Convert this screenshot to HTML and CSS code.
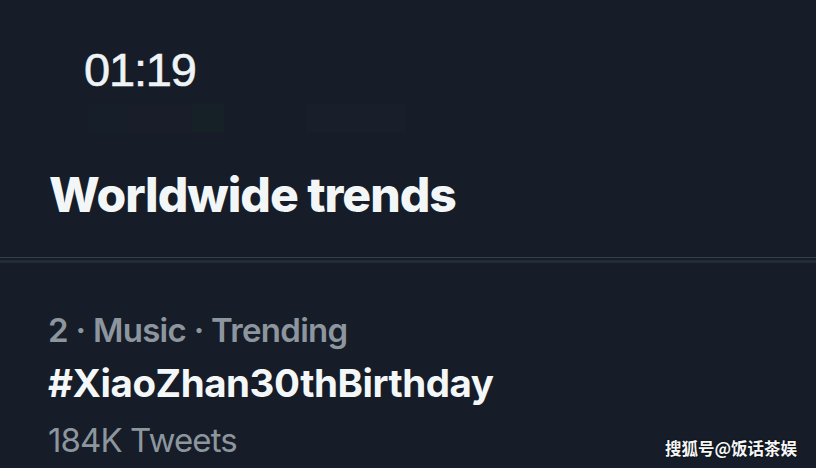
FILE: index.html
```html
<!DOCTYPE html>
<html>
<head>
<meta charset="UTF-8">
<link rel="stylesheet" href="styles.css">
<title>Worldwide trends</title>
</head>
<body>
	<div class="screen">
		<div class="status">
			<span class="clock">01:19</span>
		</div>
		<div class="tabs-ghost">
			<span class="ghost g1"></span>
			<span class="ghost g2"></span>
			<span class="ghost g3"></span>
			<span class="ghost g4"></span>
		</div>
		<h1 class="title">Worldwide trends</h1>
		<div class="divider"></div>
		<div class="trend">
			<div class="meta">2 · Music · Trending</div>
			<div class="tag">#XiaoZhan30thBirthday</div>
			<div class="count">184K Tweets</div>
		</div>
		<div class="watermark">搜狐号@饭话茶娱</div>
	</div>
</body>
</html>
```

FILE: styles.css
```css
body
{
	margin: 0;
	background: #161d28;
	font-family: Inter, "Liberation Sans", sans-serif;
}

.screen
{
	position: relative;
	width: 816px;
	height: 468px;
	overflow: hidden;
	background: #161d28;
}

.status
{
	padding: 44px 0 0 84px;
	height: 52px;
}

.clock
{
	font-family: "Liberation Sans", sans-serif;
	font-size: 47px;
	line-height: 52px;
	color: #eef3f5;
	letter-spacing: -1.2px;
	-webkit-text-stroke: 0.6px #eef3f5;
}

/* blurred leftovers of the header behind the sheet */
.tabs-ghost
{
	display: flex;
	padding: 8px 0 0 88px;
	height: 44px;
}

.ghost
{
	display: block;
	height: 28px;
}
.g1 { width: 40px; background: #161e29; }
.g2 { width: 64px; background: #191d29; }
.g3 { width: 32px; background: #152027; }
.g4 { width: 100px; margin-left: 82px; background: #181e2a; }

.title
{
	margin: 0;
	padding: 20px 0 0 49px;
	height: 89px;
	font-size: 48px;
	font-weight: 800;
	line-height: 54px;
	color: #f2f6f7;
	letter-spacing: -1px;
}

.divider
{
	height: 1px;
	background: #34404b;
	border-bottom: 2px solid #161d28;
	box-shadow: 0 3px 0 #222b36;
}

.trend
{
	padding: 43px 0 0 48px;
}

.meta
{
	font-size: 33px;
	font-weight: 600;
	line-height: 55px;
	color: #8d969f;
	letter-spacing: -0.7px;
}

.tag
{
	font-size: 38.5px;
	font-weight: 700;
	line-height: 51px;
	margin-bottom: 4px;
	color: #f3f7f8;
	letter-spacing: -0.45px;
}

.count
{
	font-size: 33px;
	font-weight: 400;
	line-height: 55px;
	color: #8d969f;
	letter-spacing: -0.9px;
}

.watermark
{
	position: absolute;
	right: 19px;
	bottom: 9px;
	font-family: "Noto Sans CJK SC", sans-serif;
	font-size: 16.5px;
	font-weight: 700;
	line-height: 22px;
	color: #f4f6f7;
	text-shadow: 0 0 2px #000;
}
```
